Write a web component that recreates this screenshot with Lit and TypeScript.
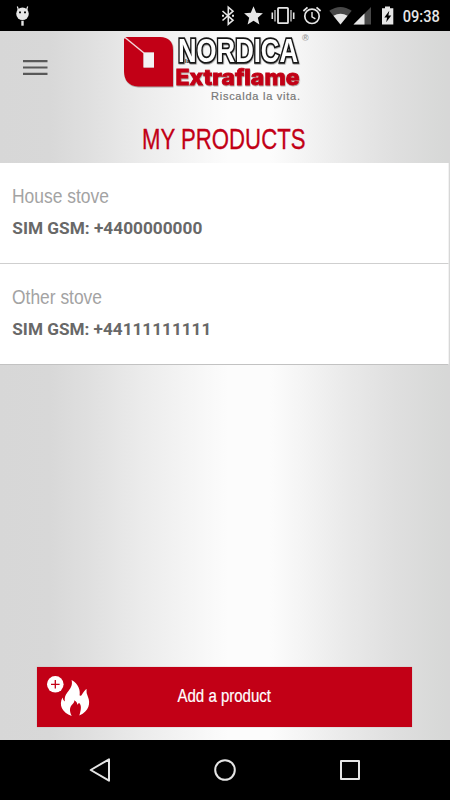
import { LitElement, html, svg, css } from "lit";
import { customElement } from "lit/decorators.js";

interface Product {
  name: string;
  nameWidth: number;
  sim: string;
  simWidth: number;
}

const PRODUCTS: Product[] = [
  { name: "House stove", nameWidth: 96, sim: "SIM GSM: +4400000000", simWidth: 190 },
  { name: "Other stove", nameWidth: 89, sim: "SIM GSM: +44111111111", simWidth: 199 },
];

@customElement("status-bar")
class StatusBar extends LitElement {
  static styles = css`
    :host { display: block; height: 31px; background: #000; }
    svg { display: block; }
    .time { font: 500 16px Roboto, sans-serif; fill: #e6e6e6; }
  `;
  render() {
    return html`<svg width="450" height="31" viewBox="0 0 450 31">
      <g fill="#e6e6e6">
        <circle cx="22.5" cy="13.7" r="6.3" />
        <path d="M18.5 10L17.3 6.5M26.5 10L27.7 6.5" stroke="#e6e6e6" stroke-width="1.2" />
        <path d="M21.3 20.7h2.4v5h-2.4z" />
        <path d="M19 11.5h2v1.8h-2zM24 11.5h2v1.8h-2z" fill="#111" />
      </g>
      <path d="M222.5 11L233 20.3 228.3 24.2V7.2L233 11.2 222.5 20.5" fill="none" stroke="#e6e6e6" stroke-width="1.6" />
      <path d="M222 14.7h2v2h-2zM232 14.7h2v2h-2z" fill="#e6e6e6" />
      <path d="M253.5 6.2L256.2 12.8 262.9 13.3 257.8 17.7 259.4 24.4 253.5 20.8 247.6 24.4 249.2 17.7 244.1 13.3 250.8 12.8Z" fill="#e6e6e6" />
      <rect x="278" y="7.8" width="10" height="15.4" rx=".8" fill="none" stroke="#e6e6e6" stroke-width="1.8" />
      <path d="M275 10v11.5M291 10v11.5" stroke="#aaa" stroke-width="1.6" />
      <path d="M272.3 12.5v6.5M293.7 12.5v6.5" stroke="#e6e6e6" stroke-width="1.6" />
      <g fill="none" stroke="#e6e6e6" stroke-width="1.7">
        <circle cx="312" cy="16.3" r="7.2" />
        <path d="M303.4 11L307.5 7.4M320.6 11L316.5 7.4" />
        <path d="M312 12v4.9l3.4 2" stroke-width="1.4" />
      </g>
      <path d="M329.3 10.8Q340.5 3.2 351.7 10.8L340.5 24.5Z" fill="#484848" />
      <path d="M333.4 15.7Q340.5 11.6 347.6 15.7L340.5 24.5Z" fill="#e6e6e6" />
      <path d="M353.5 24.5L371 7V24.5Z" fill="#484848" />
      <path d="M353.5 24.5L364.5 13.5V24.5Z" fill="#e6e6e6" />
      <path d="M382 8.3h3V6.5h5v1.8h3.3v16.2H382z" fill="#e6e6e6" />
      <path d="M389.3 10.8L384.3 17.4H387.1L386.2 22.2 391.3 15.5H388.4Z" fill="#000" />
      <text class="time" x="402.8" y="22" textLength="37" lengthAdjust="spacingAndGlyphs">09:38</text>
    </svg>`;
  }
}

@customElement("brand-header")
class BrandHeader extends LitElement {
  static styles = css`
    :host { display: block; height: 132px; }
    svg { display: block; }
    .word { font: 700 34px "Liberation Sans", sans-serif; fill: #fff; stroke: #151515; stroke-width: 3.6;
      paint-order: stroke; stroke-linejoin: miter; stroke-miterlimit: 3; }
    .flame { font: 800 21.5px Inter, Roboto, sans-serif; fill: #c20016; stroke: #c20016; stroke-width: .8; }
    .la { font: 700 6px "Liberation Sans", sans-serif; fill: #111; }
    .motto { font: 400 11px "Liberation Sans", sans-serif; fill: #777; stroke: #777; stroke-width: .2; }
    .reg { font: 700 9px "Liberation Sans", sans-serif; fill: #999; }
    .title { font: 400 29px "Liberation Sans Narrow", "Liberation Sans", sans-serif; fill: #c20016; stroke: #c20016; stroke-width: .3; }
  `;
  render() {
    return html`<svg width="450" height="132" viewBox="0 31 450 132">
      <defs>
        <filter id="shade" x="-10%" y="-10%" width="125%" height="130%">
          <feDropShadow dx=".5" dy=".8" stdDeviation=".6" flood-color="#444" flood-opacity=".55" />
        </filter>
      </defs>
      <path d="M23 61.2h24.5M23 67.5h24.5M23 73.8h24.5" stroke="#585858" stroke-width="2.2" />
      <g filter="url(#shade)">
        <path fill="#c20016" fill-rule="evenodd"
          d="M126 37H160Q173 37.5 173 50V86.5H138Q124 85.5 124 71V39ZM143.5 52.5V67.5H154V52.5Z" />
        <path d="M143.5 52.5H154V67.5H143.5Z" fill="#f3f3f3" />
      </g>
      <path d="M125 37.5L144 53" stroke="#f3d5d8" stroke-width="1.5" />
      <g filter="url(#shade)">
        <text class="word" x="178" y="61.5" textLength="120" lengthAdjust="spacingAndGlyphs">NORDICA</text>
      </g>
      <text class="la" x="185" y="63">la</text>
      <g filter="url(#shade)">
        <text class="flame" x="175.5" y="84.5" textLength="124" lengthAdjust="spacingAndGlyphs">Extraflame</text>
      </g>
      <text class="reg" x="302" y="41">®</text>
      <text class="motto" x="211" y="100" textLength="89">Riscalda la vita.</text>
      <text class="title" x="142" y="148.7" textLength="163.5" lengthAdjust="spacingAndGlyphs">MY PRODUCTS</text>
    </svg>`;
  }
}

@customElement("app-root")
class AppRoot extends LitElement {
  static styles = css`
    :host {
      display: flex; flex-direction: column; width: 450px; height: 800px; overflow: hidden;
      background: linear-gradient(90deg, #d7d7d7 0, #d8d8d8 50px, #dfdfdf 88px, #ebebeb 140px,
        #f4f4f4 185px, #fcfcfc 228px, #fcfcfc 270px, #f5f5f5 300px, #ebebeb 340px, #dfdfdf 395px, #d7d8d7 445px, #d7d7d7 450px);
    }
    svg { display: block; }
    .list { display: flex; flex-direction: column; width: 449px; }
    .row { box-sizing: border-box; height: 101px; background: #fff; border-bottom: 1px solid #cfcfcf;
      border-right: 1px solid #f2f2f2; }
    .row:last-child { border-bottom-color: #c2c2c2; }
    .name { font: 400 21px "Liberation Sans Narrow", "Liberation Sans", sans-serif; fill: #a3a3a3; }
    .sim { font: 700 17px Roboto, sans-serif; fill: #686868; }
    .spacer { flex: 1; }
    .add { box-sizing: border-box; width: 374.5px; height: 60px; margin: 0 0 13px 37px; padding: 0; border: 0;
      background: #c20016; box-shadow: 0 0 1px #b99; }
    .label { font: 400 18px "Liberation Sans Narrow", "Liberation Sans", sans-serif; fill: #fff; stroke: #fff; stroke-width: .2; }
    .nav { height: 60px; background: #000; }
  `;

  private row(p: Product) {
    return html`<div class="row">
      <svg width="448" height="100">
        <text class="name" x="12" y="40" textLength=${p.nameWidth + 1} lengthAdjust="spacingAndGlyphs">${p.name}</text>
        <text class="sim" x="12.3" y="70.7" textLength=${p.simWidth} lengthAdjust="spacingAndGlyphs">${p.sim}</text>
      </svg>
    </div>`;
  }

  private flame() {
    return svg`<path fill="#fff" d="M71.6 680C78.5 684 80.5 690 79.6 695.2Q81 697 82.6 693.5Q84 691 86.5 688.7Q86 692.5 88 697C90.5 703 89.5 711 79.3 715.5C81.5 709 81.5 705 79 702.8Q78 704.4 77.2 704.8Q77.5 702 74.2 700.3C75.3 704.5 66.5 705 71.7 716C62 712.5 58.5 705 62.5 697.5Q63.2 701 65 701.5C63.2 692 74 690 71.6 680Z" />`;
  }

  render() {
    return html`
      <status-bar></status-bar>
      <brand-header></brand-header>
      <div class="list">${PRODUCTS.map((p) => this.row(p))}</div>
      <div class="spacer"></div>
      <button class="add">
        <svg width="374" height="60" viewBox="37 667 374 60">
          <circle cx="55.3" cy="684.3" r="8.3" fill="#fff" />
          <path d="M55.3 680v8.6M51 684.3h8.6" stroke="#c20016" stroke-width="1.3" />
          ${this.flame()}
          <text class="label" x="177.5" y="701.5" textLength="93.5" lengthAdjust="spacingAndGlyphs">Add a product</text>
        </svg>
      </button>
      <div class="nav">
        <svg width="450" height="60" viewBox="0 740 450 60" fill="none" stroke="#e4e4e4" stroke-width="2" stroke-linejoin="round">
          <path d="M109 759.3V780.7L90.7 770Z" />
          <circle cx="225" cy="770" r="9.8" />
          <rect x="341" y="761" width="18" height="18" />
        </svg>
      </div>`;
  }
}
